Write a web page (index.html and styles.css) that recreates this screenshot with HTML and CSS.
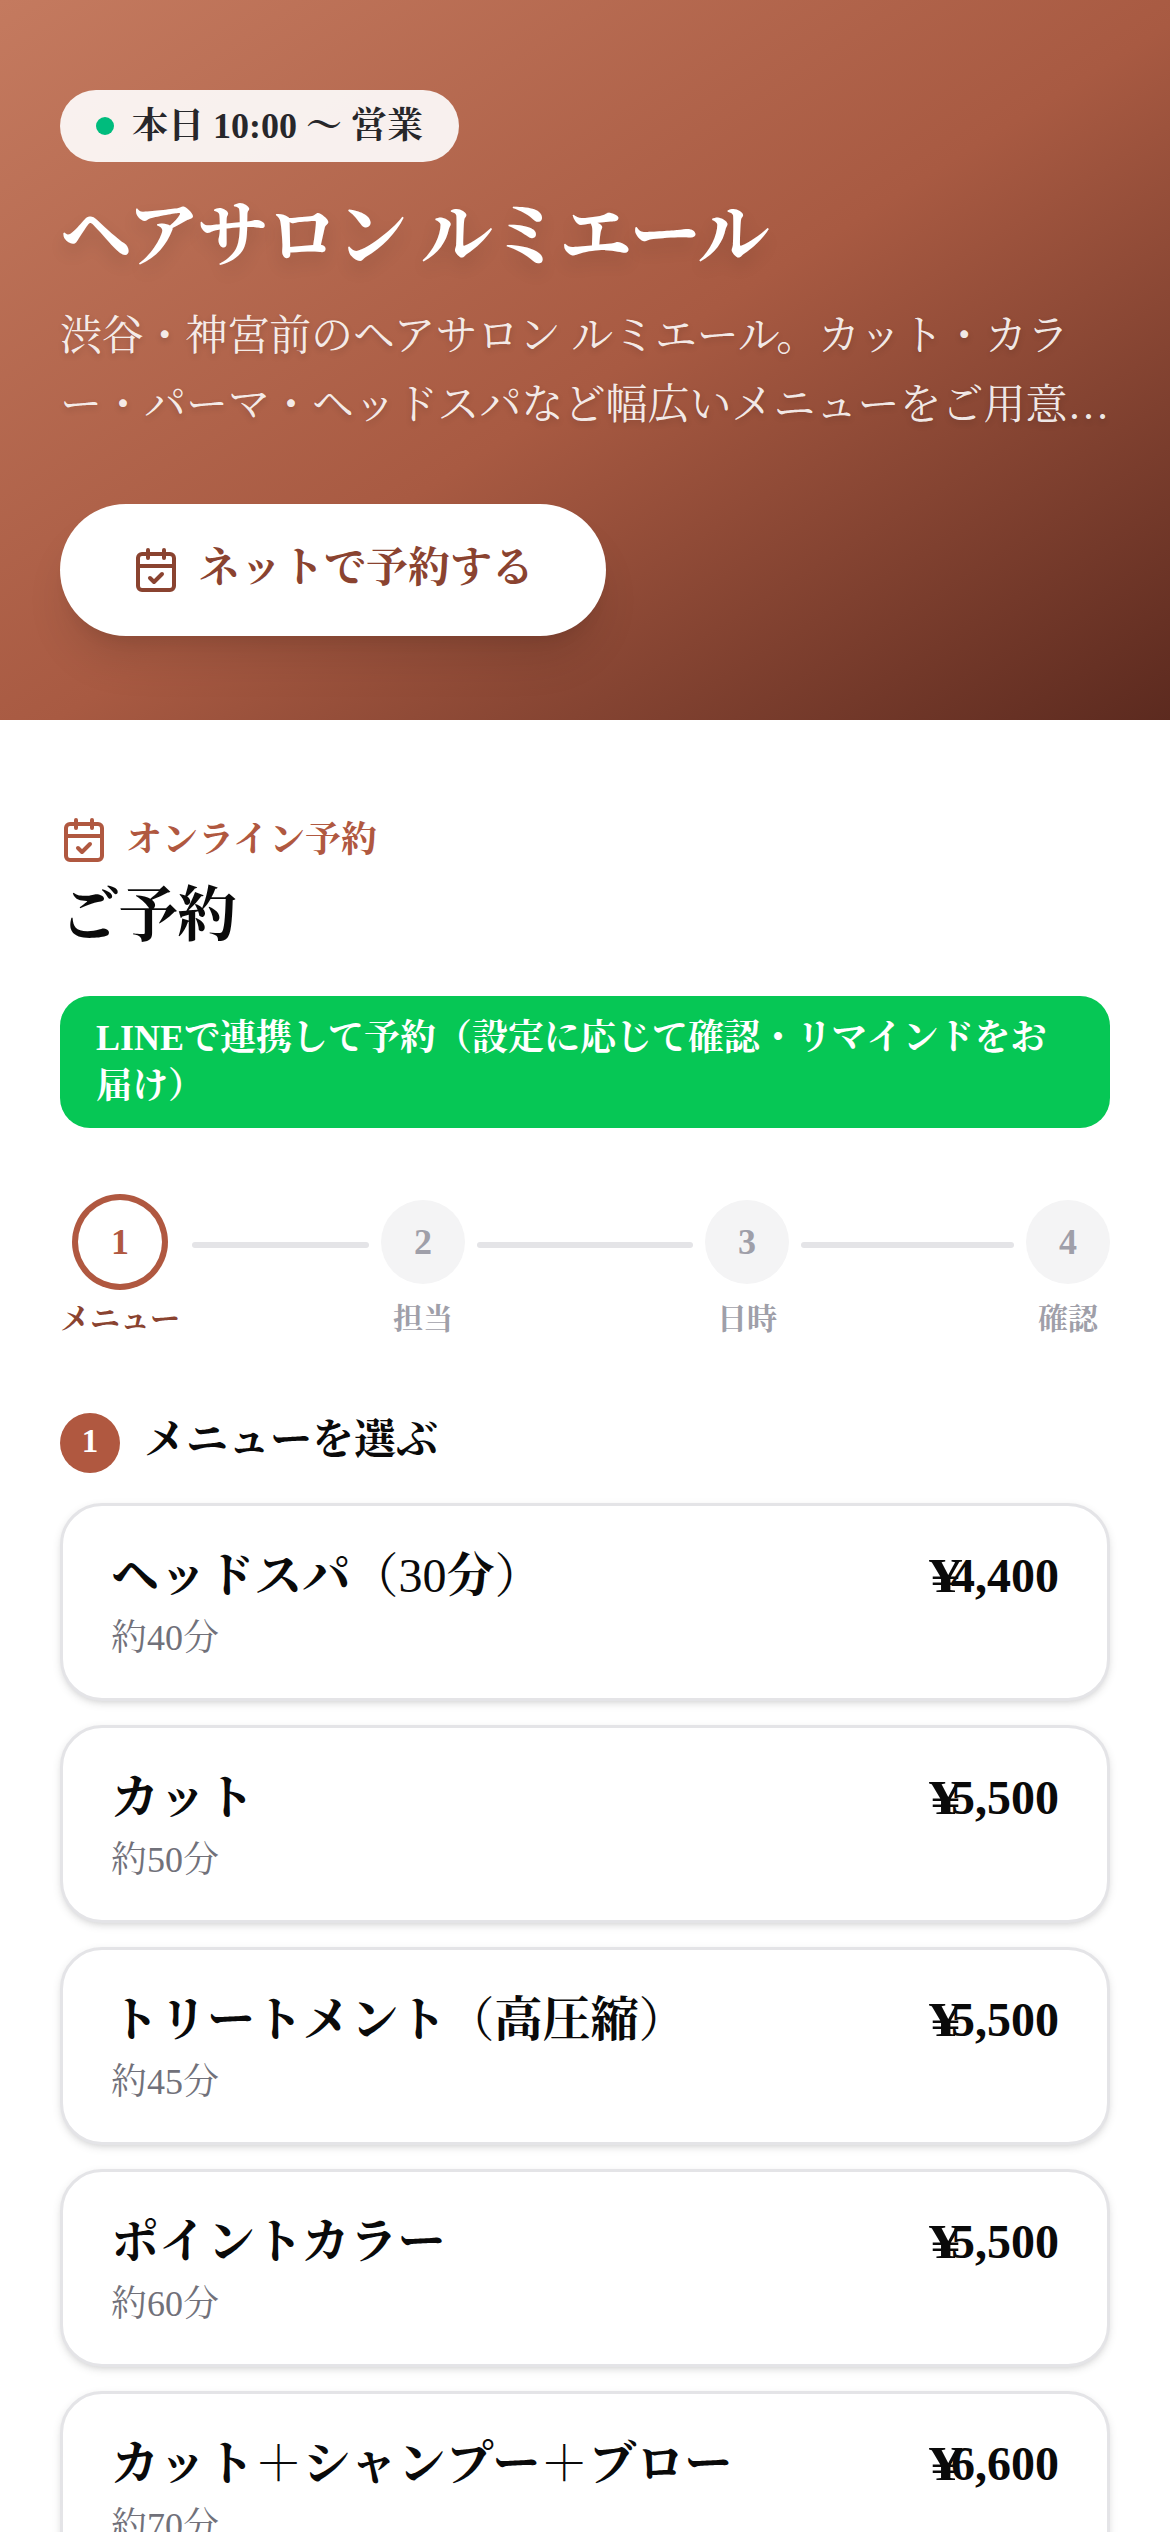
FILE: index.html
```html
<!DOCTYPE html>
<html lang="ja">
<head>
<meta charset="utf-8">
<title>ヘアサロン ルミエール</title>
<link rel="stylesheet" href="styles.css">
</head>
<body>
<svg class="defs" width="0" height="0">
  <symbol id="calendar-check" viewBox="0 0 24 24" fill="none" stroke="currentColor" stroke-width="2" stroke-linecap="round" stroke-linejoin="round">
    <path d="M8 2v4M16 2v4M3 10h18"/>
    <rect x="3" y="4" width="18" height="18" rx="2"/>
    <path d="m9 16 2 2 4-4"/>
  </symbol>
</svg>
<header class="hero">
  <div class="badge"><span class="dot"></span><span>本日 10:00 ～ 営業</span></div>
  <h1 class="salon">ヘアサロン ルミエール</h1>
  <p class="lead"><span class="lead-first">渋谷・神宮前のヘアサロン ルミエール。カット・カラ</span><br>ー・パーマ・ヘッドスパなど幅広いメニューをご用意…</p>
  <a class="cta"><svg class="icon"><use href="#calendar-check"/></svg><span class="cta-text">ネットで予約する</span></a>
</header>
<main class="booking">
  <div class="eyebrow"><svg class="icon"><use href="#calendar-check"/></svg><span class="eyebrow-text">オンライン予約</span></div>
  <h2 class="heading">ご予約</h2>
  <div class="line-link">LINEで連携して予約（設定に応じて確認・リマインドをお<br>届け）</div>
  <ol class="steps">
    <li class="step current"><span class="num">1</span><span class="label">メニュー</span></li>
    <li class="bar"></li>
    <li class="step"><span class="num">2</span><span class="label">担当</span></li>
    <li class="bar"></li>
    <li class="step"><span class="num">3</span><span class="label">日時</span></li>
    <li class="bar"></li>
    <li class="step"><span class="num">4</span><span class="label">確認</span></li>
  </ol>
  <div class="choose"><span class="choose-num">1</span><h3 class="choose-title">メニューを選ぶ</h3></div>
  <div class="menu">
    <div class="card"><div><div class="name">ヘッドスパ<span class="thin">（30</span>分<span class="thin">）</span></div><div class="time">約40分</div></div><div class="price"><span class="yen">¥</span>4,400</div></div>
    <div class="card"><div><div class="name">カット</div><div class="time">約50分</div></div><div class="price"><span class="yen">¥</span>5,500</div></div>
    <div class="card"><div><div class="name">トリートメント<span class="thin">（</span>高圧縮<span class="thin">）</span></div><div class="time">約45分</div></div><div class="price"><span class="yen">¥</span>5,500</div></div>
    <div class="card"><div><div class="name">ポイントカラー</div><div class="time">約60分</div></div><div class="price"><span class="yen">¥</span>5,500</div></div>
    <div class="card"><div><div class="name">カット<span class="thin">＋</span>シャンプー<span class="thin">＋</span>ブロー</div><div class="time">約70分</div></div><div class="price"><span class="yen">¥</span>6,600</div></div>
  </div>
</main>
</body>
</html>
```
FILE: styles.css
```css
* { box-sizing: border-box; margin: 0; padding: 0; }
html { height: 2532px; overflow: hidden; }
body {
  height: 2532px;
  overflow: hidden;
  background: #fff;
  color: #0a0a0a;
  font-family: "Liberation Serif", "Noto Serif CJK JP", "Noto Sans CJK JP", serif;
  white-space: nowrap;
}
.defs { display: block; }
.icon { width: 48px; height: 48px; flex: none; }

.hero {
  height: 720px;
  padding: 90px 60px 0;
  background: linear-gradient(148deg, #c47a5f 0%, #a85a42 52%, #5c2a1f 100%);
  color: #fff;
  display: flex;
  flex-direction: column;
  align-items: flex-start;
}
.badge {
  height: 72px;
  padding: 0 36px;
  border-radius: 36px;
  background: rgba(255, 255, 255, .9);
  color: #27272a;
  display: flex;
  align-items: center;
  gap: 18px;
  font-size: 36px;
  font-weight: 700;
  line-height: 72px;
}
.dot { width: 18px; height: 18px; border-radius: 50%; background: #00bc7d; }
.salon {
  margin-top: 29px;
  font-size: 72px;
  font-weight: 700;
  line-height: 90px;
  letter-spacing: -2.5px;
  text-shadow: 0 9px 18px rgba(0, 0, 0, .12);
}
.lead {
  margin-top: 21px;
  font-size: 42px;
  line-height: 69px;
  color: rgba(255, 255, 255, .9);
  text-shadow: 0 3px 6px rgba(0, 0, 0, .15);
}
.lead-first { letter-spacing: -.15px; }
.cta {
  margin-top: 64px;
  height: 132px;
  padding: 0 72px;
  border-radius: 66px;
  background: #fff;
  color: #8a4330;
  display: flex;
  align-items: center;
  gap: 18px;
  font-size: 42px;
  font-weight: 700;
  box-shadow: 0 30px 45px -9px rgba(0, 0, 0, .12), 0 12px 18px -12px rgba(0, 0, 0, .12);
}
.cta-text { padding-bottom: 12px; }

.booking { padding: 96px 60px 0; }
.eyebrow {
  height: 48px;
  display: flex;
  align-items: center;
  gap: 18px;
  color: #b05840;
  font-size: 36px;
  font-weight: 700;
  line-height: 48px;
}
.heading {
  margin-top: 15px;
  font-size: 60px;
  font-weight: 700;
  line-height: 75px;
  letter-spacing: -1.5px;
}
.line-link {
  margin-top: 42px;
  height: 132px;
  padding: 18px 36px;
  border-radius: 30px;
  background: #06c755;
  color: #fff;
  font-size: 36px;
  font-weight: 700;
  line-height: 48px;
}
.steps {
  margin-top: 72px;
  list-style: none;
  display: grid;
  grid-template-columns: 120px 177px 84px 216px 84px 213px 84px;
  column-gap: 12px;
}
.step { display: flex; flex-direction: column; align-items: center; color: #9f9fa9; font-weight: 700; }
.num {
  width: 84px;
  height: 84px;
  border-radius: 50%;
  background: #f4f4f5;
  text-align: center;
  font-size: 36px;
  line-height: 84px;
}
.label { margin-top: 17px; font-size: 30px; line-height: 36px; }
.current { color: #8a4330; }
.current .num { background: #fff; color: #b05840; box-shadow: 0 0 0 6px #b05840; }
.bar { height: 6px; margin-top: 42px; border-radius: 3px; background: #e4e4e7; }
.choose { margin-top: 76px; height: 60px; display: flex; align-items: center; gap: 24px; }
.choose-num {
  width: 60px;
  height: 60px;
  border-radius: 50%;
  background: #b05840;
  color: #fff;
  text-align: center;
  font-size: 33px;
  font-weight: 700;
  line-height: 57px;
}
.choose-title { padding-bottom: 6px; font-size: 42px; font-weight: 700; line-height: 54px; }
.menu { margin-top: 30px; display: flex; flex-direction: column; gap: 24px; }
.card {
  height: 198px;
  padding: 35px 48px;
  border: 3px solid #e4e4e7;
  border-radius: 42px;
  background: #fff;
  display: flex;
  justify-content: space-between;
  box-shadow: 0 3px 9px rgba(0, 0, 0, .1), 0 3px 6px -3px rgba(0, 0, 0, .1);
}
.name { padding-top: 2px; font-size: 48px; font-weight: 700; line-height: 66px; }
.thin { font-weight: 400; }
.time { padding-top: 2px; font-size: 36px; line-height: 54px; color: #71717a; }
.price { font-size: 48px; font-weight: 700; line-height: 70px; }
.yen { display: inline-block; transform: translateX(2px) scaleX(1.38); transform-origin: left; }
```
